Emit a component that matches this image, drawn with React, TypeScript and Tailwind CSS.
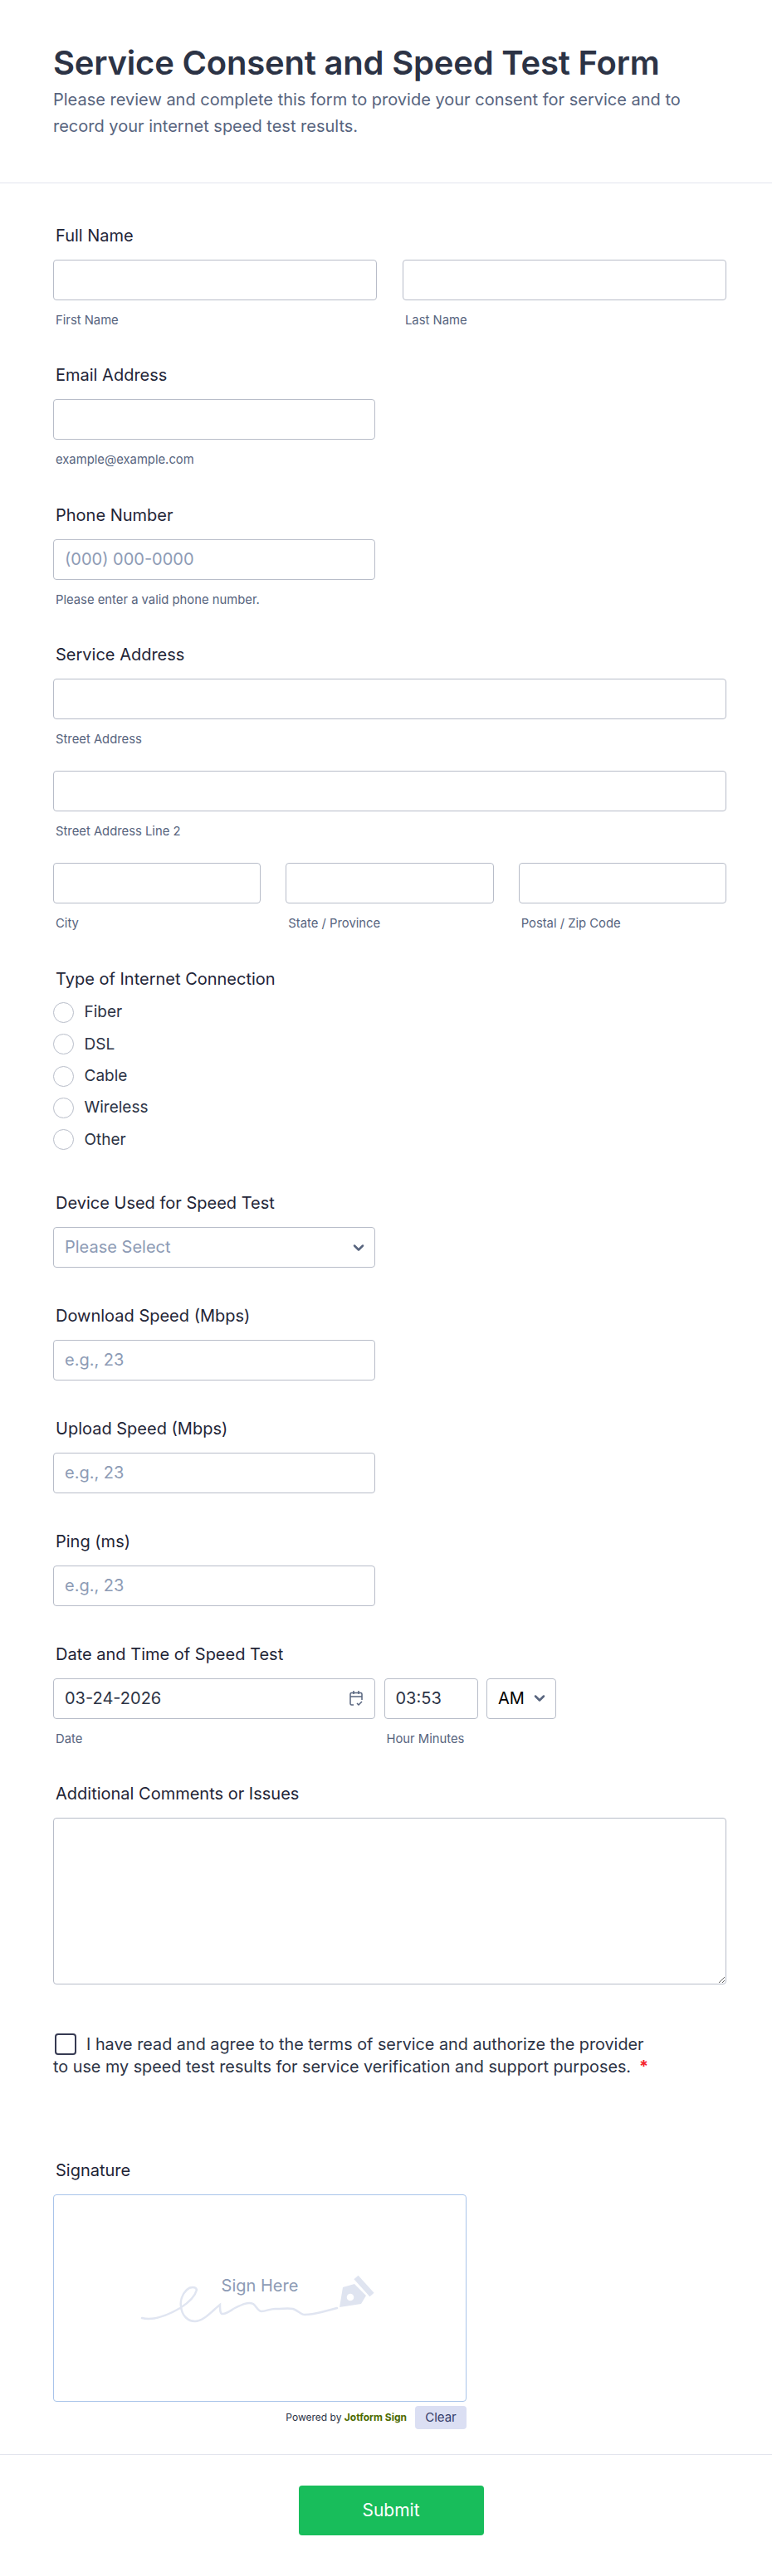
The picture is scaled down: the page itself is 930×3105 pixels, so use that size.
import { ChevronDown } from "lucide-react"
import type { ReactNode } from "react"

const inputClass =
  "block h-[49px] rounded-[4px] border border-[#b8bdc9] bg-white px-[13px] text-[20px] text-[#2c3345] outline-none placeholder:text-[#8d9bb5]"

function Label({ children }: { children: ReactNode }) {
  return <div className="ml-[3px] h-[22px] text-[20px] leading-[22px] font-normal text-[#1f2537]">{children}</div>
}

function Sub({ children }: { children: ReactNode }) {
  return <div className="mt-[15px] ml-[3px] h-[18px] text-[14.8px] leading-[18px] whitespace-nowrap text-[#57647e]">{children}</div>
}

function NumberField({ label, className = "" }: { label: string; className?: string }) {
  return (
    <div className={className}>
      <Label>{label}</Label>
      <input placeholder="e.g., 23" className={`${inputClass} mt-[18px] w-[388px]`} />
    </div>
  )
}

function SignatureSquiggle() {
  return (
    <svg viewBox="0 0 280 60" className="h-[60px] w-[280px] overflow-visible" fill="none">
      <path
        d="M-2 54C6 56 20 56 44 42C55 35 62 28 64 20C63 16 56 16 52 20C46 26 44 34 45 40C46 52 54 58 62 58C72 58 82 46 92 38C92 44 92 50 96 49C102 48 106 44 110 42C118 38 126 34 132 37C136 40 138 46 142 46C148 46 154 42 160 43C168 43 174 42 180 43C186 45 190 50 194 50C202 50 210 48 214 47L233 42"
        stroke="#e0e5f1"
        strokeWidth="2.5"
        strokeLinecap="round"
      />
      <path
        d="M236 41L240 17L254 13L268 27L262 37ZM244.700 29A4.300 4.300 0 1 0 253.300 29A4.300 4.300 0 0 0 244.700 29Z"
        fill="#dfe4f0"
        fillRule="evenodd"
      />
      <path d="M256 5L275 26" stroke="#dfe4f0" strokeWidth="7" />
    </svg>
  )
}

export default function App() {
  return (
    <div className="min-h-[3105px] bg-white font-['Inter',sans-serif] text-[#2c3345]">
      <header className="h-[221px] border-b border-[#e3e5ee] pt-[52px] pr-[55px] pl-[64px]">
        <h1 className="text-[40px] leading-[48px] font-semibold tracking-[-0.2px] text-[#2c3345]">
          Service Consent and Speed Test Form
        </h1>
        <p className="mt-[4px] text-[20px] leading-[32px] text-[#57647e]">
          Please review and complete this form to provide your consent for service and to record your internet speed
          test results.
        </p>
      </header>

      <main className="pr-[55px] pl-[64px]">
        <section className="pt-[52px]">
          <Label>Full Name</Label>
          <div className="mt-[18px] grid grid-cols-2 gap-[31px]">
            <div>
              <input className={`${inputClass} w-full`} />
              <Sub>First Name</Sub>
            </div>
            <div>
              <input className={`${inputClass} w-full`} />
              <Sub>Last Name</Sub>
            </div>
          </div>
        </section>

        <section className="mt-[46px]">
          <Label>Email Address</Label>
          <input className={`${inputClass} mt-[18px] w-[388px]`} />
          <Sub>example@example.com</Sub>
        </section>

        <section className="mt-[46.5px]">
          <Label>Phone Number</Label>
          <input placeholder="(000) 000-0000" className={`${inputClass} mt-[18px] w-[388px]`} />
          <Sub>Please enter a valid phone number.</Sub>
        </section>

        <section className="mt-[46.5px]">
          <Label>Service Address</Label>
          <input className={`${inputClass} mt-[18px] w-full`} />
          <Sub>Street Address</Sub>
          <input className={`${inputClass} mt-[29px] w-full`} />
          <Sub>Street Address Line 2</Sub>
          <div className="mt-[29px] grid grid-cols-3 gap-[30px]">
            <div>
              <input className={`${inputClass} w-full`} />
              <Sub>City</Sub>
            </div>
            <div>
              <input className={`${inputClass} w-full`} />
              <Sub>State / Province</Sub>
            </div>
            <div>
              <input className={`${inputClass} w-full`} />
              <Sub>Postal / Zip Code</Sub>
            </div>
          </div>
        </section>

        <section className="mt-[46.5px]">
          <Label>Type of Internet Connection</Label>
          <div className="mt-[11px] flex flex-col">
            {["Fiber", "DSL", "Cable", "Wireless", "Other"].map((option) => (
              <label key={option} className="flex h-[38.3px] items-center gap-[12.500px] text-[19px]">
                <span className="h-[25px] w-[25px] rounded-full border border-[#b8bdc9] bg-white" />
                {option}
              </label>
            ))}
          </div>
        </section>

        <section className="mt-[46px]">
          <Label>Device Used for Speed Test</Label>
          <div className="relative mt-[18px] w-[388px]">
            <div className={`${inputClass} flex items-center text-[#8d9bb5]`}>Please Select</div>
            <ChevronDown size={20} strokeWidth={3} className="absolute top-[15px] right-[10px] text-[#57647e]" />
          </div>
        </section>

        <NumberField label="Download Speed (Mbps)" className="mt-[47px]" />
        <NumberField label="Upload Speed (Mbps)" className="mt-[47px]" />
        <NumberField label="Ping (ms)" className="mt-[47px]" />

        <section className="mt-[47px]">
          <Label>Date and Time of Speed Test</Label>
          <div className="mt-[18px] flex gap-[10.5px]">
            <div className="w-[388px]">
              <div className={`${inputClass} flex items-center justify-between`}>
                03-24-2026
                <svg viewBox="0 0 18 20" className="h-[20px] w-[18px]" fill="none" stroke="#57647e" strokeWidth="1.5">
                  <path d="M6 18H3.500A1.500 1.500 0 0 1 2 16.500V5A1.500 1.500 0 0 1 3.500 3.500H14.500A1.500 1.500 0 0 1 16 5V12" />
                  <path d="M2 8H16M6 1V5M12 1V5M10 16L12 18L16 14" />
                </svg>
              </div>
              <Sub>Date</Sub>
            </div>
            <div className="w-[113px]">
              <div className={`${inputClass} flex items-center`}>03:53</div>
              <Sub>Hour Minutes</Sub>
            </div>
            <div className={`${inputClass} flex w-[84px] items-center justify-between !pr-[9px] text-black`}>
              AM
              <ChevronDown size={20} strokeWidth={3} className="shrink-0 text-[#57647e]" />
            </div>
          </div>
        </section>

        <section className="mt-[46.5px]">
          <Label>Additional Comments or Issues</Label>
          <textarea className="mt-[18px] block h-[201px] w-full rounded-[4px] border border-[#b8bdc9] bg-white outline-none" />
        </section>

        <section className="mt-[58.5px] text-[19.8px] leading-[27px] text-[#2c3345]">
          <div className="flex items-center">
            <span className="mr-[12px] ml-[2px] h-[26px] w-[26px] rounded-[4px] border-2 border-[#363a52] bg-white" />
            <span>I have read and agree to the terms of service and authorize the provider</span>
          </div>
          <div className="flex">
            <span>to use my speed test results for service verification and support purposes.</span>
            <span className="ml-[10px] font-bold text-[#f5222d]">*</span>
          </div>
        </section>

        <section className="mt-[100px]">
          <Label>Signature</Label>
          <div className="relative mt-[18px] flex h-[250px] w-[498px] items-center justify-center rounded-[4px] border border-[#a9c4ea] bg-white">
            <SignatureSquiggle />
            <span className="absolute top-[97px] left-0 w-full text-center text-[20px] leading-[24px] font-normal text-[#8d9bb5]">
              Sign Here
            </span>
          </div>
          <div className="mt-[5px] flex w-[498px] items-center justify-end gap-[10px]">
            <span className="text-[12px] text-[#2c3345]">
              Powered by <b className="font-bold text-[#4c6a00]">Jotform Sign</b>
            </span>
            <span className="flex h-[28px] w-[62px] items-center justify-center rounded-[4px] bg-[#dbdff3] text-[15px] text-[#343c6a]">
              Clear
            </span>
          </div>
        </section>
      </main>

      <footer className="mt-[30px] flex justify-center border-t border-[#e3e5ee] pt-[37px] pl-[12px]">
        <button className="h-[60px] w-[223px] rounded-[4px] bg-[#18bd5b] text-[21px] font-normal text-white">Submit</button>
      </footer>
    </div>
  )
}
